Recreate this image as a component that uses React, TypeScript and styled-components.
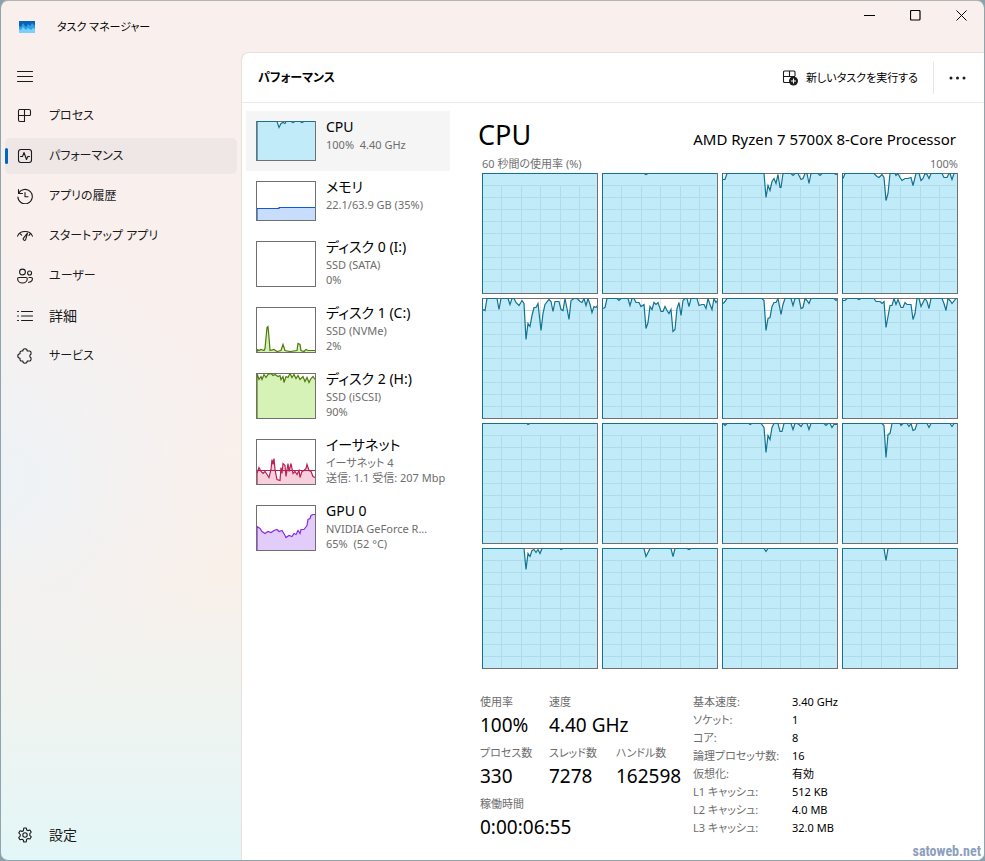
import React from "react";
import styled, { createGlobalStyle, css } from "styled-components";

const GlobalStyle = createGlobalStyle`
  * { box-sizing: border-box; }
  html, body { margin: 0; padding: 0; background: #8aa0aa; }
  body {
    font-family: "Noto Sans", "Noto Sans CJK JP", sans-serif;
    font-feature-settings: "palt";
    font-size: 11px;
    line-height: 16px;
    color: #000;
  }
  button { font: inherit; font-feature-settings: inherit; color: inherit; border: 0; padding: 0; background: none; cursor: pointer; }
  h1, h2, h3, p, dl, dt, dd, ul { margin: 0; padding: 0; font-weight: 400; }
  ul { list-style: none; }
  svg { display: block; flex: none; }
`;

const Window = styled.div`
  position: relative;
  display: flex;
  flex-direction: column;
  min-height: 100vh;
  border: 1px solid #8fa5ae;
  border-top-color: #b4b4b4;
  border-radius: 8px;
  overflow: hidden;
  background:
    radial-gradient(circle at 0 480px, rgba(236, 243, 248, 0.9), transparent 230px),
    linear-gradient(to bottom, #f9f0ee 0, #f9f0ee 360px, #faf0eb 480px, #f9f0ea 580px, #eef4f1 720px, #e3f6f7 100%);
`;

const TitleBar = styled.header`
  display: flex;
  height: 51px;
  padding-left: 18px;
  align-items: center;
  gap: 22px;
`;

const WindowTitle = styled.span`
  flex: 1;
`;

const WindowControls = styled.div`
  display: flex;
  align-self: flex-start;
`;

const WindowButton = styled.button`
  display: flex;
  width: 46px;
  height: 28px;
  align-items: center;
  justify-content: center;
`;

const Body = styled.div`
  display: flex;
  flex: 1;
`;

const Sidebar = styled.nav`
  display: flex;
  flex-direction: column;
  flex: none;
  width: 240px;
  padding: 4px 4px 5px;
`;

const Spacer = styled.div`
  flex: 1;
`;

const NavItem = styled.button<{ $active?: boolean; $kanji?: boolean }>`
  position: relative;
  display: flex;
  align-items: center;
  gap: 16px;
  height: 36px;
  margin: 2px 0;
  padding-left: 12px;
  border-radius: 5px;
  font-size: ${(p) => (p.$kanji ? 14 : 12)}px;
  text-align: left;
  color: #1b1b1b;
  ${(p) =>
    p.$active &&
    css`
      background: #efe6e6;
      &::before {
        content: "";
        position: absolute;
        left: 0;
        top: 10px;
        width: 3px;
        height: 16px;
        border-radius: 2px;
        background: #0067c0;
      }
    `}
`;

const Content = styled.main`
  display: flex;
  flex-direction: column;
  flex: 1;
  min-width: 0;
  background: #fff;
  border: 1px solid #eadfdd;
  border-right: 0;
  border-bottom: 0;
  border-top-left-radius: 8px;
`;

const PageHeader = styled.div`
  display: flex;
  align-items: center;
  height: 50px;
  padding-left: 16px;
  border-bottom: 1px solid #ebebeb;
`;

const PageTitle = styled.h1`
  flex: 1;
  font-size: 12px;
  font-weight: 600;
`;

const NewTask = styled.button`
  display: flex;
  align-items: center;
  gap: 7px;
  padding-right: 15px;
`;

const MoreButton = styled.button`
  display: flex;
  align-items: center;
  justify-content: center;
  width: 51px;
  height: 32px;
  padding-right: 3px;
  border-left: 1px solid #e5e5e5;
`;

const Columns = styled.div`
  display: flex;
  flex: 1;
  padding: 8px 26px 14px 4px;
`;

const DeviceList = styled.ul`
  flex: none;
  width: 208px;
`;

const Device = styled.li<{ $active?: boolean }>`
  width: 204px;
  background: ${(p) => (p.$active ? "#f5f5f5" : "transparent")};
`;

const DeviceButton = styled.button`
  display: flex;
  gap: 10px;
  width: 208px;
  padding: 10px 0 10px 10px;
  text-align: left;
`;

const DeviceText = styled.span`
  display: flex;
  flex-direction: column;
  flex: 1;
  min-width: 0;
  margin: -4px 0;
  white-space: pre;
`;

const DeviceName = styled.span`
  font-size: 14px;
  line-height: 20px;
`;

const DeviceInfo = styled.span`
  line-height: 15px;
  color: #6d6d6d;
`;

const Detail = styled.section`
  display: flex;
  flex-direction: column;
  flex: 1;
  min-width: 0;
  margin-left: 24px;
  padding: 6px 0 0 4px;
`;

const DetailHead = styled.div`
  display: flex;
  align-items: baseline;
  justify-content: space-between;
  margin-left: -4px;
  padding-right: 2px;
`;

const DetailTitle = styled.h2`
  font-size: 27px;
  line-height: 36px;
`;

const DetailModel = styled.p`
  font-size: 15px;
  line-height: 20px;
`;

const AxisRow = styled.div`
  display: flex;
  justify-content: space-between;
  height: 20px;
  padding-top: 3px;
  color: #707070;
`;

const CoreGrid = styled.div`
  display: grid;
  flex: 1;
  min-height: 400px;
  grid-template-columns: repeat(4, 1fr);
  grid-template-rows: repeat(4, 1fr);
  gap: 4px;
`;

const CoreCell = styled.div`
  display: flex;
  border: 1px solid #707070;
  border-top: 0;
  border-left-color: #11738f;
  overflow: hidden;
  min-height: 0;

  svg {
    width: 100%;
    height: 100%;
    flex: 1;
  }
`;

const Thumb = styled.span<{ $tall?: boolean; $line?: string }>`
  flex: none;
  width: 60px;
  height: ${(p) => (p.$tall ? 46 : 40)}px;
  border: 1px solid #707070;
  border-top: 0;
  overflow: hidden;
  background: #fff;
`;

const Facts = styled.div`
  display: flex;
  padding-top: 24px;
  margin-left: -2px;
`;

const Stats = styled.dl`
  display: grid;
  grid-template-columns: 69px 67px 77px;
  align-content: start;
`;

const Stat = styled.div<{ $wide?: boolean }>`
  height: 51px;
  white-space: nowrap;
  ${(p) => p.$wide && css`grid-column: span 2;`}

  dt { line-height: 18px; color: #6d6d6d; }
  dd { font-size: 19px; line-height: 28px; }
`;

const Specs = styled.table`
  border-collapse: collapse;
  align-self: flex-start;
  line-height: 18px;
  white-space: nowrap;

  th {
    width: 99px;
    padding: 0;
    font-weight: 400;
    text-align: left;
    color: #6d6d6d;
  }
  td { padding: 0; }
`;

const Watermark = styled.span`
  position: absolute;
  right: 3px;
  bottom: 1px;
  font: bold 14px/16px "Liberation Sans Narrow", "Roboto Condensed", "Roboto", sans-serif;
  color: #8ca0bd;
`;

/* Each series is a list of x,y pairs; y is measured down from the top edge. */
const CORES: string[] = [
  "0,0 115,0",
  "0,0 41,0 43,1 45,0 115,0",
  "0,6 2,6 4,0 41,0 43,24 45,12 47,17 49,8 51,5 53,10 55,1 57,14 58,14 60,0 68,0 70,2 72,0 75,0 78,6 80,5 82,0 84,0 86,10 88,0 95,0 97,2 99,0 111,0 113,1 115,1",
  "0,5 2,0 31,0 34,3 36,4 39,1 41,4 43,27 45,20 47,0 52,0 53,2 55,0 57,4 59,7 62,5 65,5 68,4 70,12 73,0 76,0 78,7 80,5 82,0 84,1 86,5 88,0 99,0 101,4 104,4 106,0 107,0 109,6 111,0 115,0",
  "0,11 2,12 4,0 14,0 16,11 18,0 25,0 27,6 29,0 31,0 33,4 36,7 39,2 41,5 43,41 45,25 47,28 49,17 51,9 53,9 55,5 58,32 60,15 62,6 66,1 68,3 70,13 72,3 76,3 78,11 80,12 82,0 84,10 86,21 88,2 91,0 94,0 97,3 99,4 101,0 103,7 105,0 107,6 109,14 111,8 113,9 115,6",
  "0,10 2,9 4,0 14,0 16,2 18,0 25,0 27,7 29,0 31,0 33,4 36,4 38,8 41,6 43,30 45,24 47,8 49,11 51,4 53,6 55,4 58,13 60,13 62,8 64,12 66,15 68,11 70,33 72,31 74,10 76,4 78,17 80,2 82,0 84,0 86,8 88,0 94,0 96,7 99,6 101,6 103,10 105,0 107,6 109,11 111,0 113,4 115,1",
  "0,5 2,3 4,0 39,0 41,2 43,32 45,20 47,19 49,8 51,4 53,4 55,0 58,16 60,6 62,0 68,0 70,7 72,0 76,0 78,10 80,9 82,0 84,2 86,5 88,0 111,0 113,2 115,0",
  "0,2 2,2 4,0 14,0 16,1 18,0 31,0 33,3 37,3 39,5 41,3 43,29 45,18 47,7 49,7 51,0 53,6 55,1 58,9 60,9 62,4 64,6 68,6 70,21 72,15 74,0 76,0 78,8 82,0 84,3 86,10 88,0 99,0 101,5 103,12 105,0 107,2 109,5 113,0 115,0",
  "0,0 44,0 45,1 47,0 115,0",
  "0,0 115,0",
  "0,0 2,2 4,0 26,0 27,1 29,0 38,0 41,4 43,29 45,12 47,16 49,4 51,0 55,0 57,8 59,8 61,0 68,0 70,6 72,0 74,0 76,1 78,3 80,0 84,0 86,6 88,0 101,0 103,2 105,0 107,0 109,4 111,1 115,1",
  "0,0 39,0 41,2 43,34 45,11 47,10 49,0 57,0 58,2 60,0 64,0 66,3 68,0 70,7 72,6 74,0 84,0 86,4 88,0 107,0 109,3 111,0 115,0",
  "0,0 41,0 43,21 45,5 47,8 49,2 51,1 53,4 55,1 57,5 59,0 77,0 78,1 80,0 115,0",
  "0,0 41,0 43,8 45,4 47,0 68,0 70,8 72,0 84,0 86,1 88,0 115,0",
  "0,0 41,0 43,3 45,0 115,0",
  "0,0 41,0 43,12 45,0 115,0",
];

function CoreChart({ points, index }: { points: string; index: number }) {
  return (
    <CoreCell>
      <svg viewBox="0 0 114 120" preserveAspectRatio="none" role="img" aria-label={`CPU ${index}`}>
        <g fill="none" stroke="#e4e4e4" shapeRendering="crispEdges">
          {[18, 38, 57, 77, 96].map((x) => (
            <line key={x} x1={x + 0.5} x2={x + 0.5} y1="0" y2="120" />
          ))}
        </g>
        <line x1="0" x2="114" y1="0.5" y2="0.5" stroke="#707070" />
        <g transform="translate(0 0.5)">
          <polygon points={`0,120 ${points} 115,120`} fill="#c2ebfa" />
        </g>
        <g fill="none" stroke="#b0dcea" shapeRendering="crispEdges">
          {[18, 38, 57, 77, 96].map((x) => (
            <line key={x} x1={x + 0.5} x2={x + 0.5} y1="12" y2="120" />
          ))}
          {[12, 24, 36, 48, 60, 72, 84, 96, 108].map((y) => (
            <line key={y} x1="0" x2="113" y1={y + 0.5} y2={y + 0.5} />
          ))}
        </g>
        <polyline transform="translate(0 0.5)" points={points} fill="none" stroke="#11738f" strokeWidth="1.2" />
      </svg>
    </CoreCell>
  );
}

interface DeviceData {
  name: string;
  info: string[];
  points?: string;
  line?: string;
  fill?: string;
  average?: number;
}

const DEVICES: DeviceData[] = [
  { name: "CPU", info: ["100%  4.40 GHz"], line: "#11738f", fill: "#c2ebfa", points: "0,0 20,0 22,6 24,2 26,1 28,2 29,0 34,0 36,1 38,0 43,0 45,1 47,0 58,0" },
  { name: "メモリ", info: ["22.1/63.9 GB (35%)"], line: "#0f5bd7", fill: "#c8dcfb", points: "0,27 22,27 22,26 58,26" },
  { name: "ディスク 0 (I:)", info: ["SSD (SATA)", "0%"] },
  { name: "ディスク 1 (C:)", info: ["SSD (NVMe)", "2%"], line: "#4f7a0c", fill: "#d7f2b6", points: "0,42 2,43 4,42 7,43 8,41 10,20 11,19 12,30 13,43 17,42 20,44 24,43 26,37 28,43 33,44 40,43 41,36 43,37 44,43 47,44 49,42 51,43 58,43" },
  { name: "ディスク 2 (H:)", info: ["SSD (iSCSI)", "90%"], line: "#4f7a0c", fill: "#d7f2b6", points: "0,0 2,6 4,3 5,6 7,1 9,4 11,1 14,0 16,2 18,1 21,3 23,2 24,6 26,3 27,9 29,3 31,4 33,0 35,4 37,1 39,5 41,2 43,6 46,3 48,8 50,4 52,9 54,5 56,3 58,6" },
  { name: "イーサネット", info: ["イーサネット 4", "送信: 1.1 受信: 207 Mbp"], line: "#b71f55", fill: "#f8d0dc", average: 31, points: "0,34 2,28 4,32 6,34 8,32 10,35 12,38 14,30 15,20 16,25 17,19 18,30 20,40 23,41 24,28 25,34 26,24 28,26 29,37 31,24 32,32 34,24 36,34 38,32 40,35 42,31 43,38 45,32 47,31 49,29 50,25 52,31 54,32 56,37 58,38" },
  { name: "GPU 0", info: ["NVIDIA GeForce R...", "65%  (52 °C)"], line: "#8a2be2", fill: "#e1ccfa", points: "0,21 3,23 5,26 8,28 11,26 14,27 17,25 20,24 22,26 25,25 28,30 29,32 32,30 35,31 37,28 39,29 41,25 43,28 44,24 47,24 50,20 51,14 53,13 54,10 56,9 58,9" },
];

function DeviceThumb({ device }: { device: DeviceData }) {
  const tall = device.info.length > 1;
  const h = tall ? 45 : 39;
  return (
    <Thumb $tall={tall}>
      <svg width="58" height={h} aria-hidden="true">
        <line x1="0" x2="58" y1="0.5" y2="0.5" stroke="#707070" />
        {device.points && (
          <g transform="translate(0 0.5)">
            <polygon points={`0,${h} ${device.points} 58,${h}`} fill={device.fill} />
            <polyline points={`0,${h} ${device.points}`} fill="none" stroke={device.line} strokeWidth="1.2" />
          </g>
        )}
        {device.average && <line x1="0" x2="58" y1={device.average + 0.5} y2={device.average + 0.5} stroke={device.line} />}
      </svg>
    </Thumb>
  );
}

const Icon = ({ children, size = 16 }: { children: React.ReactNode; size?: number }) => (
  <svg width={size} height={size} viewBox="0 0 16 16" fill="none" stroke="#1b1b1b" strokeWidth="1.1" strokeLinecap="round" strokeLinejoin="round" aria-hidden="true">
    {children}
  </svg>
);

const AppIcon = () => (
  <svg width="16" height="12" viewBox="0 0 16 12" aria-hidden="true">
    <rect width="16" height="12" fill="#0a62b4" />
    <path d="M0 5 2 6 4 2 6 5 7 6 9 3 11 5 13 2 16 5V12H0Z" fill="#2f9fe8" />
    <path d="M0 8 2 9 4 6 7 9 9 7 12 9 14 7 16 8V12H0Z" fill="#7bd0fa" />
  </svg>
);

const icons = {
  menu: <path d="M.5 3.5h15M.5 8.5h15M.5 13.5h15" />,
  processes: <path d="M2.5 1.5H12a1.5 1.5 0 0 1 1.5 1.5v3.5a1 1 0 0 1-1 1H1.5V3a1.5 1.5 0 0 1 1-1.5ZM7.5 1.5V13.5H3A1.5 1.5 0 0 1 1.5 12V7.5" />,
  performance: (
    <>
      <rect x="1.5" y="1.5" width="13" height="13" rx="2.5" />
      <path d="M3.5 8.5h2l1.5-4 2.5 7 1.3-3h1.7" />
    </>
  ),
  history: <path d="M1.5 1.5v4h4M1.7 5.3A7.2 7.2 0 1 1 .9 9M8 4.5v4.3h3" />,
  startup: <path d="M.6 8.2C1.5 5.5 4.3 3.5 8 3.5s6.5 2 7.4 4.7M2.7 5.3l2 1.9M13.3 5.3 12 7.6M10.5 5.2 6.3 10.4a1.4 1.4 0 0 0 2.3 1.5Z" />,
  users: (
    <>
      <circle cx="5.5" cy="4" r="2.9" />
      <circle cx="12.6" cy="5" r="2" />
      <path d="M2 9.5h7a1.3 1.3 0 0 1 1.3 1.3c0 2.5-2.3 4.2-4.8 4.2S.6 13.3.6 10.8A1.3 1.3 0 0 1 2 9.5ZM12 9.5h2.2a1.2 1.2 0 0 1 1.2 1.2c0 2-1.5 3.3-3.9 3.5" />
    </>
  ),
  details: <path d="M4.5 3.5h11M4.5 8h11M4.5 12.5h11M.5 3.5h1M.5 8h1M.5 12.5h1" />,
  services: <path d="M5.8 3a2.2 2.2 0 0 1 4.4 0h2.3A1.5 1.5 0 0 1 14 4.500V6.300a1.800 1.800 0 0 0 0 3.400v1.800a1.500 1.500 0 0 1-1.500 1.500h-2.300a2.200 2.200 0 0 1-4.400 0H4.500A1.500 1.500 0 0 1 3 11.500V10.200a2.200 2.200 0 0 1 0-4.400V4.500A1.500 1.500 0 0 1 4.500 3Z" />,
  settings: (
    <>
      <circle cx="8" cy="8" r="2.2" />
      <path d="M6.8 1h2.4l.5 2 1.2.6 2-.6 1.3 2.1-1.4 1.6v1.6l1.5 1.5-1.3 2.2-2-.5-1.3.7L9.2 15H6.8l-.5-2-1.3-.7-2 .5-1.3-2.2 1.5-1.5V7.5L1.8 5.9 3.1 3.8l2 .6 1.2-.6Z" />
    </>
  ),
};

const NAV: { label: string; icon: React.ReactNode; kanji?: boolean }[] = [
  { label: "プロセス", icon: icons.processes },
  { label: "パフォーマンス", icon: icons.performance },
  { label: "アプリの履歴", icon: icons.history },
  { label: "スタートアップ アプリ", icon: icons.startup },
  { label: "ユーザー", icon: icons.users },
  { label: "詳細", icon: icons.details, kanji: true },
  { label: "サービス", icon: icons.services },
];

const STATS: { label: string; value: string; wide?: boolean }[] = [
  { label: "使用率", value: "100%" },
  { label: "速度", value: "4.40 GHz", wide: true },
  { label: "プロセス数", value: "330" },
  { label: "スレッド数", value: "7278" },
  { label: "ハンドル数", value: "162598" },
  { label: "稼働時間", value: "0:00:06:55", wide: true },
];

const SPECS = [
  ["基本速度:", "3.40 GHz"],
  ["ソケット:", "1"],
  ["コア:", "8"],
  ["論理プロセッサ数:", "16"],
  ["仮想化:", "有効"],
  ["L1 キャッシュ:", "512 KB"],
  ["L2 キャッシュ:", "4.0 MB"],
  ["L3 キャッシュ:", "32.0 MB"],
];

export default function App() {
  return (
    <>
      <GlobalStyle />
      <Window>
        <TitleBar>
          <AppIcon />
          <WindowTitle>タスク マネージャー</WindowTitle>
          <WindowControls>
            <WindowButton aria-label="最小化">
              <svg width="11" height="11"><path d="M0 5.5h11" stroke="#000" /></svg>
            </WindowButton>
            <WindowButton aria-label="最大化">
              <svg width="11" height="11"><rect x=".5" y=".5" width="9.5" height="9.5" rx="1" fill="none" stroke="#000" strokeWidth="1.2" /></svg>
            </WindowButton>
            <WindowButton aria-label="閉じる">
              <svg width="11" height="11"><path d="M.5.5l10 10M10.5.5l-10 10" stroke="#000" /></svg>
            </WindowButton>
          </WindowControls>
        </TitleBar>
        <Body>
          <Sidebar>
            <NavItem aria-label="メニュー"><Icon>{icons.menu}</Icon></NavItem>
            {NAV.map((item, i) => (
              <NavItem key={item.label} $active={i === 1} $kanji={item.kanji}>
                <Icon>{item.icon}</Icon>
                {item.label}
              </NavItem>
            ))}
            <Spacer />
            <NavItem $kanji>
              <Icon>{icons.settings}</Icon>
              設定
            </NavItem>
          </Sidebar>
          <Content>
            <PageHeader>
              <PageTitle>パフォーマンス</PageTitle>
              <NewTask>
                <svg width="17" height="16" viewBox="0 0 17 16" fill="none" stroke="#1b1b1b" strokeWidth="1.1" aria-hidden="true">
                  <path d="M8 12.5H2.5a1 1 0 0 1-1-1V2a1 1 0 0 1 1-1H12a1 1 0 0 1 1 1v4M1.5 6.5H13M7.5 1v6" />
                  <circle cx="11.5" cy="11" r="4.5" fill="#1b1b1b" stroke="none" />
                  <path d="M9 11h5M11.5 8.5v5" stroke="#fff" />
                </svg>
                新しいタスクを実行する
              </NewTask>
              <MoreButton aria-label="その他">
                <svg width="17" height="4" fill="#1b1b1b"><circle cx="2" cy="2" r="1.5" /><circle cx="8.5" cy="2" r="1.5" /><circle cx="15" cy="2" r="1.5" /></svg>
              </MoreButton>
            </PageHeader>
            <Columns>
              <DeviceList>
                {DEVICES.map((device, i) => (
                  <Device key={device.name} $active={i === 0}>
                    <DeviceButton>
                      <DeviceThumb device={device} />
                      <DeviceText>
                        <DeviceName>{device.name}</DeviceName>
                        {device.info.map((line) => (
                          <DeviceInfo key={line}>{line}</DeviceInfo>
                        ))}
                      </DeviceText>
                    </DeviceButton>
                  </Device>
                ))}
              </DeviceList>
              <Detail>
                <DetailHead>
                  <DetailTitle>CPU</DetailTitle>
                  <DetailModel>AMD Ryzen 7 5700X 8-Core Processor</DetailModel>
                </DetailHead>
                <AxisRow>
                  <span>60 秒間の使用率 (%)</span>
                  <span>100%</span>
                </AxisRow>
                <CoreGrid>
                  {CORES.map((points, i) => (
                    <CoreChart key={i} points={points} index={i} />
                  ))}
                </CoreGrid>
                <Facts>
                  <Stats>
                    {STATS.map((s) => (
                      <Stat key={s.label} $wide={s.wide}>
                        <dt>{s.label}</dt>
                        <dd>{s.value}</dd>
                      </Stat>
                    ))}
                  </Stats>
                  <Specs>
                    <tbody>
                      {SPECS.map(([label, value]) => (
                        <tr key={label}>
                          <th scope="row">{label}</th>
                          <td>{value}</td>
                        </tr>
                      ))}
                    </tbody>
                  </Specs>
                </Facts>
              </Detail>
            </Columns>
          </Content>
        </Body>
        <Watermark>satoweb.net</Watermark>
      </Window>
    </>
  );
}
